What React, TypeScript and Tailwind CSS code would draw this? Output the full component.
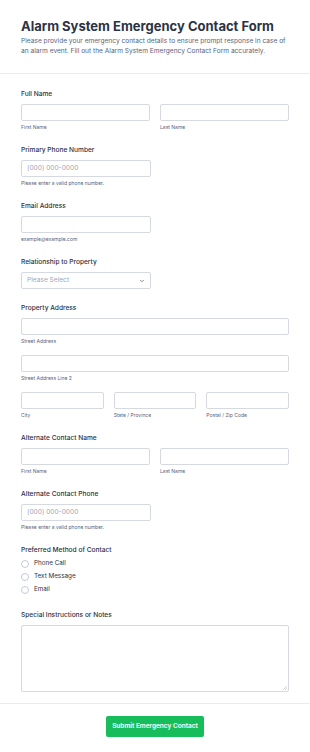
import { ChevronDown } from "lucide-react";

const inputCls = "h-[17px] rounded-[2px] border border-[#d6d9e0] bg-white";

const Label = ({ children }: { children: React.ReactNode }) => (
    <div className="text-[6.6px] font-medium text-[#2c3345] leading-[9px] mb-[5px]">{children}</div>
);

const Sub = ({ children }: { children: React.ReactNode }) => (
    <div className="text-[5px] text-[#57647e] mt-[3px] leading-[7px]">{children}</div>
);

const NameRow = () => (
    <div className="flex gap-[10px]">
        <div className="flex-1">
            <div className={inputCls}></div>
            <Sub>First Name</Sub>
        </div>
        <div className="flex-1">
            <div className={inputCls}></div>
            <Sub>Last Name</Sub>
        </div>
    </div>
);

const Phone = () => (
    <div className="w-[130px]">
        <div className={`${inputCls} flex items-center px-[5px] text-[6.6px] text-[#a0a7b6]`}>(000) 000-0000</div>
        <Sub>Please enter a valid phone number.</Sub>
    </div>
);

export default function App() {
    return (
        <div className="w-[310px] min-h-[752px] bg-white text-[#2c3345]" style={{ fontFamily: "Inter, 'Noto Sans', sans-serif" }}>
            <div className="px-[21px] pt-[17px] pb-[17px] border-b border-[#eaebf2]">
                <h1 className="text-[13px] font-bold leading-[18px] text-[#2c3345] whitespace-nowrap">Alarm System Emergency Contact Form</h1>
                <p className="text-[6.6px] leading-[10px] text-[#57647e] mt-[1px] max-w-[266px]">
                    Please provide your emergency contact details to ensure prompt response in case of an alarm event. Fill out the Alarm System Emergency Contact Form accurately.
                </p>
            </div>

            <div className="px-[21px] pt-[16px] flex flex-col gap-[15px]">
                <div>
                    <Label>Full Name</Label>
                    <NameRow />
                </div>
                <div>
                    <Label>Primary Phone Number</Label>
                    <Phone />
                </div>
                <div>
                    <Label>Email Address</Label>
                    <div className="w-[130px]">
                        <div className={inputCls}></div>
                        <Sub>example@example.com</Sub>
                    </div>
                </div>
                <div>
                    <Label>Relationship to Property</Label>
                    <div className={`${inputCls} w-[130px] flex items-center justify-between px-[5px] text-[6.6px] text-[#a0a7b6]`}>
                        <span>Please Select</span>
                        <ChevronDown size={6} strokeWidth={3} className="text-[#57647e]" />
                    </div>
                </div>
                <div>
                    <Label>Property Address</Label>
                    <div className={inputCls}></div>
                    <Sub>Street Address</Sub>
                    <div className={`${inputCls} mt-[10px]`}></div>
                    <Sub>Street Address Line 2</Sub>
                    <div className="flex gap-[10px] mt-[10px]">
                        <div className="flex-1">
                            <div className={inputCls}></div>
                            <Sub>City</Sub>
                        </div>
                        <div className="flex-1">
                            <div className={inputCls}></div>
                            <Sub>State / Province</Sub>
                        </div>
                        <div className="flex-1">
                            <div className={inputCls}></div>
                            <Sub>Postal / Zip Code</Sub>
                        </div>
                    </div>
                </div>
                <div>
                    <Label>Alternate Contact Name</Label>
                    <NameRow />
                </div>
                <div>
                    <Label>Alternate Contact Phone</Label>
                    <Phone />
                </div>
                <div>
                    <Label>Preferred Method of Contact</Label>
                    <div className="flex flex-col gap-[5px]">
                        {["Phone Call", "Text Message", "Email"].map((o) => (
                            <div key={o} className="flex items-center gap-[5px] h-[8px]">
                                <span className="w-[8px] h-[8px] rounded-full border border-[#c3cad8] bg-white"></span>
                                <span className="text-[6.3px] text-[#2c3345]">{o}</span>
                            </div>
                        ))}
                    </div>
                </div>
                <div className="mt-[2px]">
                    <Label>Special Instructions or Notes</Label>
                    <div className="relative h-[67px] rounded-[2px] border border-[#d6d9e0]">
                        <svg className="absolute right-[1px] bottom-[1px]" width="4" height="4" viewBox="0 0 4 4">
                            <path d="M4 0 L0 4 M4 2 L2 4" stroke="#b0b5c0" strokeWidth="0.6" />
                        </svg>
                    </div>
                </div>
            </div>

            <div className="mt-[11px] border-t border-[#eaebf2] flex justify-center pt-[12px] pb-[16px]">
                <button className="h-[21px] w-[98px] rounded-[2px] bg-[#18bd5b] text-white text-[6.5px] font-semibold">
                    Submit Emergency Contact
                </button>
            </div>
        </div>
    );
}
